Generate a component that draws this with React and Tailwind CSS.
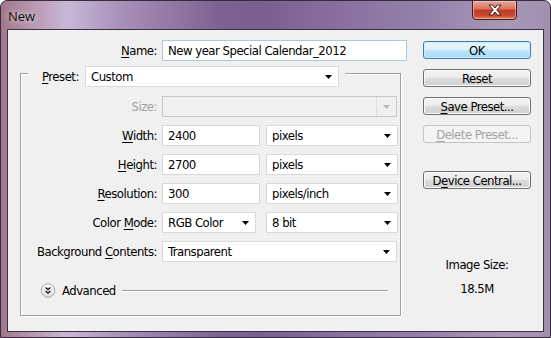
import React from "react";

const U = ({ children }) => <span className="underline underline-offset-[2px] decoration-1">{children}</span>;

const Arrow = ({ disabled }) => (
  <svg width="7" height="4" viewBox="0 0 7 4" className="shrink-0">
    <path d="M0 0H7L3.5 4Z" fill={disabled ? "#b8b8b8" : "#000"} />
  </svg>
);

const Select = ({ value, w, disabled }) => (
  <div
    className={`${w} h-[21px] flex items-center border ${disabled ? "border-[#c6c6c6] bg-[#f0f0f0]" : "border-[#dadada] bg-white"} pl-[5px] pr-[6px]`}
  >
    <span className="flex-1 truncate">{value}</span>
    {disabled && <span className="w-px h-[19px] bg-[#e0e0e0] mr-[6px]" />}
    <Arrow disabled={disabled} />
  </div>
);

const Input = ({ value, w, focus }) => (
  <div
    className={`${w} h-[21px] flex items-center border ${focus ? "border-[#a8c8e8]" : "border-[#d8d8d8]"} bg-white pl-[5px]`}
  >
    {value}
  </div>
);

const Button = ({ children, variant }) => {
  const base = "w-[108px] h-[18px] rounded-[3px] flex items-center justify-center border";
  if (variant === "default")
    return (
      <div className={`${base} border-[#3c7fb1] bg-[linear-gradient(#eaf6fd_0%,#d9f0fc_50%,#bee6fd_50%,#a7d9f5_100%)] shadow-[inset_0_0_0_1px_#c8ecfc]`}>
        {children}
      </div>
    );
  if (variant === "disabled")
    return (
      <div className={`${base} border-[#c4c4c4] bg-[#f4f4f4] text-[#a3a3a3]`}>{children}</div>
    );
  return (
    <div className={`${base} border-[#707070] bg-[linear-gradient(#f2f2f2_0%,#ebebeb_50%,#dddddd_50%,#cfcfcf_100%)] shadow-[inset_0_0_0_1px_#fbfbfb]`}>
      {children}
    </div>
  );
};

const Row = ({ label, disabled, children }) => (
  <div className="flex items-center h-[21px]">
    <div className={`w-[136px] text-right ${disabled ? "text-[#a0a0a0]" : ""}`}>{label}</div>
    <div className="ml-[5px] flex items-center">{children}</div>
  </div>
);

export default function App() {
  return (
    <div
      className="w-[551px] h-[338px] overflow-hidden relative flex flex-col rounded-t-[7px] border border-[#3a2a40] bg-[linear-gradient(90deg,#a07888_0%,#b898b0_6%,#c8b8d8_12%,#a890b8_22%,#7c6292_40%,#7a6090_48%,#8a70a0_62%,#9482aa_78%,#a898b8_92%,#a090b0_100%)] font-['DejaVu_Sans_Condensed','DejaVu_Sans',sans-serif] text-[13px] tracking-[-0.5px] text-black leading-none"
    >
      {/* title bar */}
      <div className="h-[28px] flex items-center pl-[7px] pt-[3px] shrink-0">
        <span className="font-['Open_Sans',sans-serif] text-[13px] tracking-normal text-[#101010] [text-shadow:0_0_6px_rgba(255,255,255,0.9)]">New</span>
      </div>
      <div className="absolute top-[-1px] right-[33px] w-[45px] h-[20px] rounded-b-[4px] border border-[#4a1a14] bg-[linear-gradient(#e8a898_0%,#d87060_45%,#c03820_50%,#c84a30_80%,#e08060_100%)] flex items-center justify-center shadow-[inset_0_0_0_1px_rgba(255,220,210,0.5)]">
        <svg width="14" height="12" viewBox="0 0 14 12">
          <path d="M1 1H4.5L7 4L9.5 1H13L8.8 6L13 11H9.5L7 8L4.5 11H1L5.2 6Z" fill="#fff" stroke="#3a2020" strokeWidth="1" strokeLinejoin="round" />
        </svg>
      </div>

      {/* client area */}
      <div className="flex-1 mx-[6px] mb-[5px] border border-[#3c3044] bg-[#f0f0f0] flex">
        {/* left */}
        <div className="w-[400px] flex flex-col">
          <div className="mt-[10px] flex items-center h-[21px]">
            <div className="w-[149px] text-right"><U>N</U>ame:</div>
            <div className="ml-[5px]">
              <Input value="New year Special Calendar_2012" w="w-[245px]" focus />
            </div>
          </div>

          <div className="mt-[12px] ml-[12px] w-[381px] h-[243px] border border-[#a0a0a0] shadow-[1px_1px_0_#fff,inset_1px_1px_0_#fff] flex flex-col">
            <div className="-mt-[8px] ml-[7px] self-start bg-[#f0f0f0] pl-[14px] pr-[6px] flex items-center h-[21px]">
              <span className="w-[38px]"><U>P</U>reset:</span>
              <div className="ml-[5px]">
                <Select value="Custom" w="w-[254px]" />
              </div>
            </div>
            <div className="mt-[9px] flex flex-col gap-[8px]">
              <Row label="Size:" disabled>
                <Select value="" w="w-[235px]" disabled />
              </Row>
              <Row label={<><U>W</U>idth:</>}>
                <Input value="2400" w="w-[98px]" />
                <div className="ml-[6px]"><Select value="pixels" w="w-[132px]" /></div>
              </Row>
              <Row label={<><U>H</U>eight:</>}>
                <Input value="2700" w="w-[98px]" />
                <div className="ml-[6px]"><Select value="pixels" w="w-[132px]" /></div>
              </Row>
              <Row label={<><U>R</U>esolution:</>}>
                <Input value="300" w="w-[98px]" />
                <div className="ml-[6px]"><Select value="pixels/inch" w="w-[132px]" /></div>
              </Row>
              <Row label={<>Color <U>M</U>ode:</>}>
                <Select value="RGB Color" w="w-[94px]" />
                <div className="ml-[10px]"><Select value="8 bit" w="w-[132px]" /></div>
              </Row>
              <Row label={<>Background <U>C</U>ontents:</>}>
                <Select value="Transparent" w="w-[235px]" />
              </Row>
            </div>
            <div className="mt-[21px] ml-[19px] flex items-center">
              <svg width="16" height="15" viewBox="0 0 16 15">
                <defs>
                  <linearGradient id="ag" x1="0" y1="0" x2="0" y2="1">
                    <stop offset="0" stopColor="#ffffff" />
                    <stop offset="1" stopColor="#dcdcdc" />
                  </linearGradient>
                </defs>
                <circle cx="8" cy="7.5" r="6.8" fill="url(#ag)" stroke="#a8a8a8" />
                <path d="M5.5 4.5L8 6.5L10.5 4.5M5.5 8L8 10L10.5 8" fill="none" stroke="#202020" strokeWidth="1.4" />
              </svg>
              <span className="ml-[6px]">Advanced</span>
              <div className="ml-[6px] w-[266px] h-px bg-[#a0a0a0] shadow-[0_1px_0_#fff]" />
            </div>
          </div>
        </div>

        {/* right */}
        <div className="ml-[15px] mt-[11px] flex flex-col items-center">
          <Button variant="default">OK</Button>
          <div className="mt-[10px]"><Button>Reset</Button></div>
          <div className="mt-[10px]"><Button><span><U>S</U>ave Preset...</span></Button></div>
          <div className="mt-[10px]"><Button variant="disabled"><span><U>D</U>elete Preset...</span></Button></div>
          <div className="mt-[28px]"><Button><span>D<U>e</U>vice Central...</span></Button></div>
          <div className="mt-[69px] w-[108px] text-center">Image Size:</div>
          <div className="mt-[11px] w-[108px] text-center">18.5M</div>
        </div>
      </div>
    </div>
  );
}
